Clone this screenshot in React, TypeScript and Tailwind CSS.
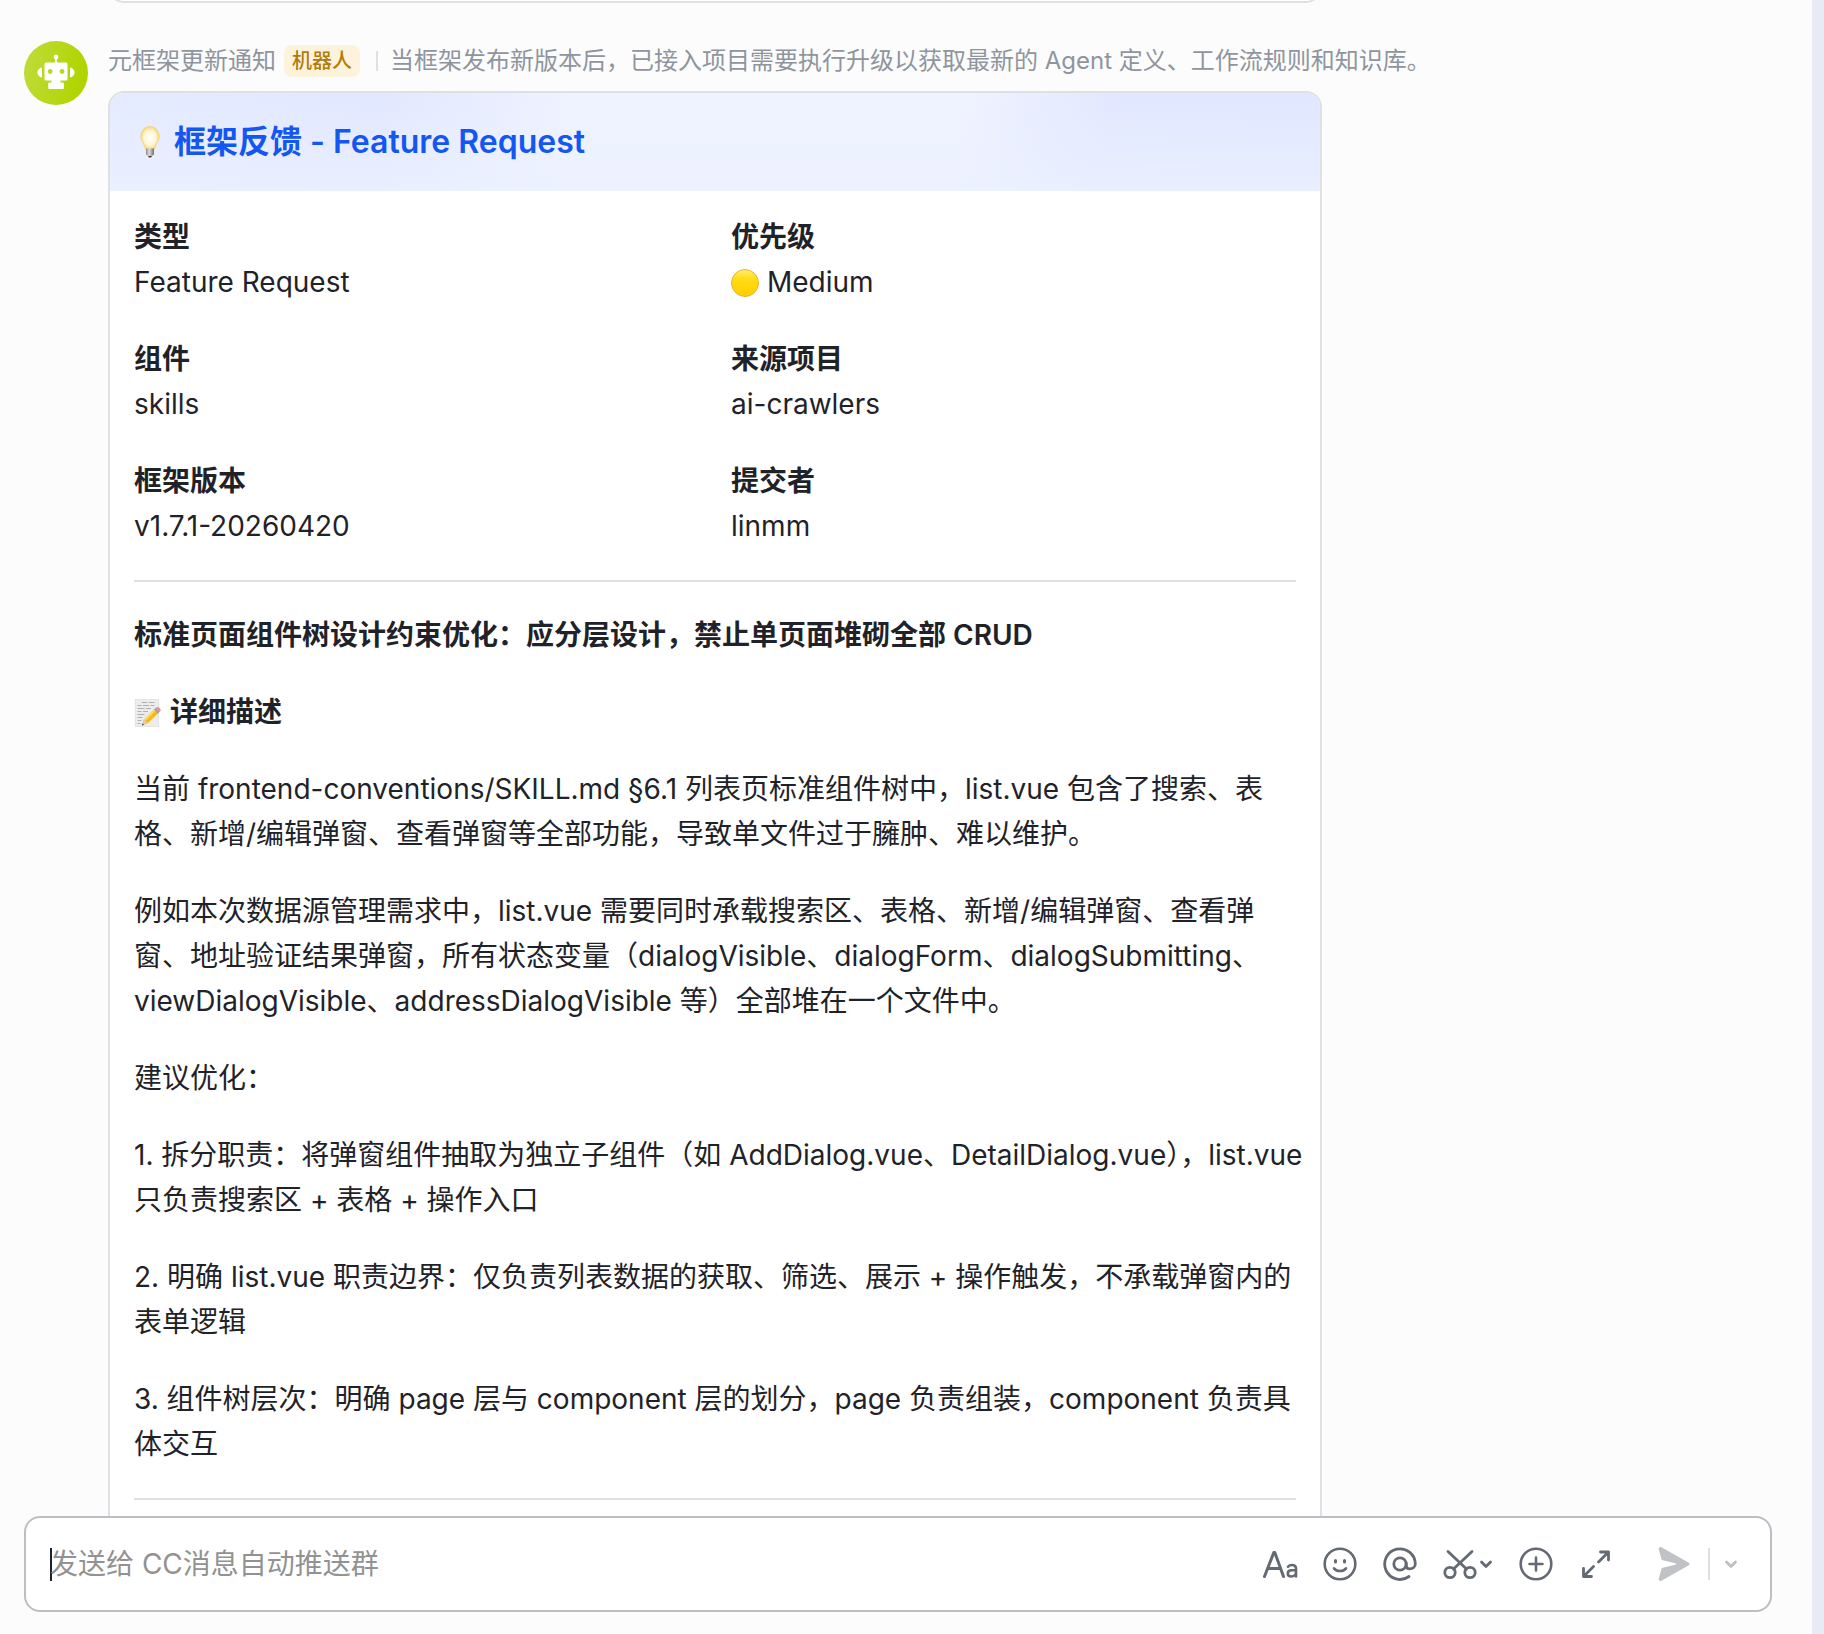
import type { ReactNode } from "react";

const fields = [
  { label: "类型", value: "Feature Request" },
  { label: "优先级", value: "Medium", dot: true },
  { label: "组件", value: "skills" },
  { label: "来源项目", value: "ai-crawlers" },
  { label: "框架版本", value: "v1.7.1-20260420" },
  { label: "提交者", value: "linmm" },
];

const paragraphs = [
  "当前 frontend-conventions/SKILL.md §6.1 列表页标准组件树中，list.vue 包含了搜索、表格、新增/编辑弹窗、查看弹窗等全部功能，导致单文件过于臃肿、难以维护。",
  "例如本次数据源管理需求中，list.vue 需要同时承载搜索区、表格、新增/编辑弹窗、查看弹窗、地址验证结果弹窗，所有状态变量（dialogVisible、dialogForm、dialogSubmitting、viewDialogVisible、addressDialogVisible 等）全部堆在一个文件中。",
  "建议优化：",
  "1. 拆分职责：将弹窗组件抽取为独立子组件（如 AddDialog.vue、DetailDialog.vue），list.vue 只负责搜索区 + 表格 + 操作入口",
  "2. 明确 list.vue 职责边界：仅负责列表数据的获取、筛选、展示 + 操作触发，不承载弹窗内的表单逻辑",
  "3. 组件树层次：明确 page 层与 component 层的划分，page 负责组装，component 负责具体交互",
];

function RobotAvatar() {
  return (
    <svg viewBox="0 0 64 64" className="size-16 shrink-0" aria-hidden="true">
      <defs>
        <linearGradient id="avatar" x1="0" y1="0" x2="1" y2="0.2">
          <stop offset="0" stopColor="#c0dc3c" />
          <stop offset="1" stopColor="#b0d400" />
        </linearGradient>
      </defs>
      <circle cx="32" cy="32" r="32" fill="url(#avatar)" />
      <g fill="#fff">
        <circle cx="32" cy="16" r="2.4" />
        <rect x="31.2" y="17" width="1.6" height="6" />
        <rect x="20.5" y="21.5" width="23" height="18" rx="1.5" />
        <path d="M18 26.5v10c-2.600-.4-4.600-2.400-4.600-5s2-4.600 4.600-5zM46 26.500v10c2.600-.4 4.600-2.400 4.600-5s-2-4.600-4.600-5z" />
        <path d="M27.500 39h9v2.500h2.200a1.200 1.200 0 0 1 1.200 1.200V47a1 1 0 0 1-1 1H25.200a1 1 0 0 1-1-1v-4.300a1.200 1.200 0 0 1 1.200-1.200h2.100z" />
      </g>
      <circle cx="26.200" cy="30.500" r="2.400" fill="#b9d820" />
      <circle cx="38" cy="30.500" r="2.400" fill="#b9d820" />
    </svg>
  );
}

function Bulb() {
  return (
    <svg viewBox="0 0 32 32" className="size-8 shrink-0" aria-hidden="true">
      <defs>
        <radialGradient id="bulb" cx="0.5" cy="0.5" r="0.5">
          <stop offset="0" stopColor="#fffef6" />
          <stop offset="0.6" stopColor="#fff8dc" />
          <stop offset="1" stopColor="#f8d877" />
        </radialGradient>
        <linearGradient id="cap" x1="0" x2="1">
          <stop offset="0" stopColor="#8a8a8a" />
          <stop offset="0.4" stopColor="#dedede" />
          <stop offset="1" stopColor="#6e6e6e" />
        </linearGradient>
      </defs>
      <path d="M16 0.500a9.200 9.800 0 0 1 9.200 9.800c0 4.800-3.600 7.200-4.800 13.200h-8.800c-1.200-6-4.800-8.400-4.800-13.200A9.200 9.800 0 0 1 16 .5z" fill="url(#bulb)" stroke="#f3cf6b" strokeWidth="0.8" />
      <path d="M12 22.500h8v6l-2.400 1.800h-3.200L12 28.500z" fill="url(#cap)" />
      <path d="M14 30h4l-1 1.600h-2z" fill="#3a3a3a" />
    </svg>
  );
}

function Memo() {
  return (
    <svg viewBox="0 0 28 28" className="size-7 shrink-0" aria-hidden="true">
      <rect x="1.200" y="0.500" width="23.600" height="27" fill="#ececec" stroke="#dadada" strokeWidth="0.6" />
      <path
        d="M8 3.500h5M14.500 3.500h6M3.500 6.500h4M9 6.500h6M16.500 6.500h4M3.500 9.500h7M12 9.500h5M3.500 12.500h4M9 12.500h5M3.500 15.500h7M3.500 18.500h5M3.500 21.500h4M3.500 24.500h3"
        stroke="#a9a9a9"
        strokeWidth="0.9"
      />
      <path d="M10 20.500 20.500 10l4 4L14 24l-6 2.600z" fill="#f5b91f" />
      <path d="m10 20.500 10.500-10.500 1.400 1.400L11.300 22z" fill="#ffdc55" />
      <path d="m10 20.500 4 3.500-6 2.600z" fill="#e8c79a" />
      <path d="m8.600 24.600 1.400 1.200-2 .8z" fill="#333" />
      <path d="m20 10.500 1.800-1.800 4 4-1.800 1.800z" fill="#9aa4ad" />
      <path d="m21.800 8.700.8-.5c1.800-.8 4.600 2 4 3.700l-.8.800z" fill="#f08a8a" />
    </svg>
  );
}

function YellowDot() {
  return (
    <svg viewBox="0 0 28 28" className="size-7 shrink-0" aria-hidden="true">
      <defs>
        <linearGradient id="dot" x1="0" y1="0" x2="0" y2="1">
          <stop offset="0" stopColor="#ffef70" />
          <stop offset="0.35" stopColor="#ffdc14" />
          <stop offset="1" stopColor="#ffcf00" />
        </linearGradient>
      </defs>
      <circle cx="14" cy="14" r="13.500" fill="url(#dot)" stroke="#eeb030" />
    </svg>
  );
}

function ToolButton({ label, children }: { label: string; children: ReactNode }) {
  return (
    <button type="button" aria-label={label} className="flex h-9 shrink-0 items-center justify-center text-[#646a73]">
      {children}
    </button>
  );
}

function Composer() {
  return (
    <form className="mr-10 ml-6 flex h-24 shrink-0 items-center rounded-2xl border-2 border-[#bbbfc4] bg-white px-6">
      <span className="h-[33px] w-0.5 shrink-0 bg-[#1f2329]" />
      <input
        type="text"
        aria-label="消息"
        placeholder="发送给 CC消息自动推送群"
        className="-ml-0.5 h-12 min-w-0 flex-1 text-[28px] text-[#1f2329] outline-none placeholder:text-[#929292]"
      />
      <div className="flex items-center gap-6">
        <ToolButton label="文字格式">
          <svg viewBox="0 0 36 36" className="size-9" fill="none" stroke="currentColor" strokeWidth="3" strokeLinecap="round" strokeLinejoin="round">
            <path d="M2.500 30.500 11.800 6.500h1L21.500 30.500M6 22.500h12.500" />
            <path d="M26 20.800c1-1.300 2.500-1.800 4-1.800 2.400 0 4 1.300 4 3.800v7.700M34 24.300h-4.200c-2.400 0-4 1.200-4 3.100s1.400 3.100 3.400 3.100c2.700 0 4.800-1.700 4.800-4" strokeWidth="2.600" />
          </svg>
        </ToolButton>
        <ToolButton label="表情">
          <svg viewBox="0 0 36 36" className="size-9" fill="none" stroke="currentColor" strokeWidth="2.600" strokeLinecap="round">
            <circle cx="18" cy="18" r="15.300" />
            <path d="M13.500 14.500v1.600M22.500 14.500v1.600" strokeWidth="3" />
            <path d="M12 22.300c3 3.600 9 3.600 12 0" />
          </svg>
        </ToolButton>
        <ToolButton label="提及">
          <svg viewBox="0 0 36 36" className="size-9" fill="none" stroke="currentColor" strokeWidth="2.800" strokeLinecap="round" strokeLinejoin="round">
            <circle cx="18" cy="18" r="6.200" />
            <path d="M24.200 17v2.200c0 2.200 1.400 3.600 3.400 3.600 3.400 0 5.700-2.200 5.700-4.800A15.300 15.300 0 1 0 27 30.500" />
          </svg>
        </ToolButton>
        <ToolButton label="截图">
          <svg viewBox="0 0 52 36" className="h-9 w-[52px]" fill="none" stroke="currentColor" strokeWidth="2.800" strokeLinecap="round" strokeLinejoin="round">
            <path d="M6 5.500 24.500 23M30 5.500 11.500 23" />
            <circle cx="8" cy="26.500" r="5.200" />
            <circle cx="28" cy="26.500" r="5.200" />
            <path d="m39.500 16 4.500 4.500 4.500-4.500" />
          </svg>
        </ToolButton>
        <ToolButton label="更多">
          <svg viewBox="0 0 36 36" className="size-9" fill="none" stroke="currentColor" strokeWidth="2.600" strokeLinecap="round">
            <circle cx="18" cy="18" r="15.300" />
            <path d="M18 11.500v13M11.500 18h13" />
          </svg>
        </ToolButton>
        <ToolButton label="展开">
          <svg viewBox="0 0 36 36" className="size-9" fill="none" stroke="currentColor" strokeWidth="2.800" strokeLinecap="round" strokeLinejoin="round">
            <path d="M22.500 6H30.500v8M30 6.500 20.500 16M5.500 22.500v8h8M6 30l9.500-9.500" />
          </svg>
        </ToolButton>
      </div>
      <button type="submit" aria-label="发送" className="ml-11 shrink-0 text-[#c0c2c6]">
        <svg viewBox="0 0 32 36" className="h-9 w-8" fill="currentColor">
          <path d="M.8 3.400C.2 1.600 1.700.4 3.400 1.300l27 15.200c1.500.9 1.500 2.100 0 3L3.400 34.700C1.700 35.600.2 34.400.8 32.600l3-10.600 13.600-3.200c.8-.2.800-1.400 0-1.600L3.800 14z" />
        </svg>
      </button>
      <span className="mr-3.5 ml-[18px] h-8 w-0.5 shrink-0 bg-[#dee0e3]" />
      <button type="button" aria-label="发送选项" className="mr-2 shrink-0 text-[#bbbfc4]">
        <svg viewBox="0 0 14 14" className="size-3.5" fill="none" stroke="currentColor" strokeWidth="2.800" strokeLinecap="round" strokeLinejoin="round">
          <path d="m2.500 5 4.500 4.500L11.500 5" />
        </svg>
      </button>
    </form>
  );
}

export default function App() {
  return (
    <div className="flex h-screen bg-[#fcfcfc] font-[Inter,'Noto_Sans_CJK_SC',sans-serif] text-[#1f2329]">
      <main className="flex min-w-0 flex-1 flex-col pb-[22px]">
        <div className="flex min-h-0 flex-1 flex-col overflow-hidden pr-10 pl-6">
          {/* tail of the previous message */}
          <div className="ml-[84px] h-[3px] max-w-[1214px] shrink-0 overflow-hidden">
            <div className="-mt-10 h-[43px] rounded-2xl border-2 border-[#dee0e3] bg-white" />
          </div>

          <article className="mt-[38px] flex shrink-0 gap-5">
            <RobotAvatar />
            <div className="min-w-0 flex-1">
              <header className="mt-1 flex h-8 items-center text-2xl whitespace-nowrap text-[#8f959e]">
                <span>元框架更新通知</span>
                <span className="ml-2 rounded-lg bg-[#fdf3dc] px-2 text-xl leading-8 font-medium text-[#b27b0b]">机器人</span>
                <span className="mr-3 ml-4 h-5 w-0.5 bg-[#dee0e3]" />
                <span>当框架发布新版本后，已接入项目需要执行升级以获取最新的 Agent 定义、工作流规则和知识库。</span>
              </header>

              <section className="mt-3.5 max-w-[1214px] overflow-hidden rounded-t-2xl border-2 border-b-0 border-[#dee0e3] bg-white">
                <div className="bg-[linear-gradient(to_bottom,rgba(240,245,255,0)_0%,rgba(236,241,255,0.8)_100%),linear-gradient(100deg,#e5ebff_0%,#e1e7ff_22%,#eff3ff_38%,#eff3ff_70%,#e1e7ff_82%,#e0e7ff_100%)]">
                  <h1 className="flex h-[98px] items-center gap-2 px-6 text-[32px] font-semibold text-[#1456f0]">
                    <Bulb />
                    框架反馈 - Feature Request
                  </h1>
                </div>

                <div className="px-6 pt-6 pb-8 text-[28px] leading-[45px]">
                  <dl className="grid grid-cols-2 gap-8">
                    {fields.map((field) => (
                      <div key={field.label}>
                        <dt className="font-semibold">{field.label}</dt>
                        <dd className="flex items-center gap-2">
                          {field.dot && <YellowDot />}
                          {field.value}
                        </dd>
                      </div>
                    ))}
                  </dl>

                  <hr className="my-[31px] border-t-2 border-[#dee0e3]" />

                  <div className="-mr-2 space-y-8">
                    <h2 className="font-semibold">标准页面组件树设计约束优化：应分层设计，禁止单页面堆砌全部 CRUD</h2>
                    <h3 className="flex items-center gap-2 font-semibold">
                      <Memo />
                      详细描述
                    </h3>
                    {paragraphs.map((text) => (
                      <p key={text}>{text}</p>
                    ))}
                  </div>

                  <hr className="my-[31px] border-t-2 border-[#dee0e3]" />
                </div>
              </section>
            </div>
          </article>
        </div>

        <Composer />
      </main>
      <aside className="w-3 shrink-0 bg-[#e8eaf6]" />
    </div>
  );
}
